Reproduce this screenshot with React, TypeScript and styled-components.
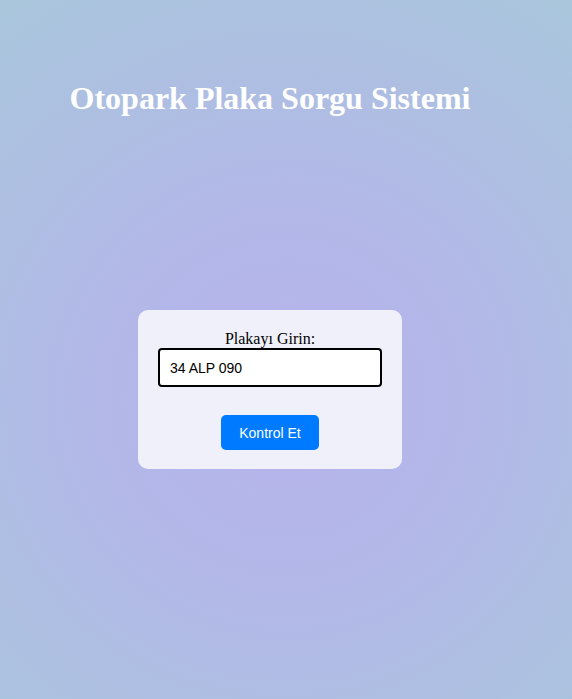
import React, { useState } from "react";
import styled, { createGlobalStyle } from "styled-components";

const Global = createGlobalStyle`
  html, body { margin: 0; padding: 0; }
  body {
    min-height: 100vh;
    background: radial-gradient(circle at 286px 400px, #b6b3ec 0%, #b3b7e8 35%, #a9c6dc 100%);
    font-family: "Liberation Serif", "Times New Roman", serif;
  }
`;

const Page = styled.div`
  width: 524px;
  padding: 0 8px;
  display: flex;
  flex-direction: column;
  align-items: center;
  min-height: 699px;
  box-sizing: content-box;
`;

const Title = styled.h1`
  margin: 80px 0 0;
  font-family: "Liberation Serif", "Times New Roman", serif;
  font-size: 32px;
  font-weight: bold;
  line-height: 37px;
  color: #ffffff;
`;

const Card = styled.div`
  margin-top: 193px;
  width: 264px;
  box-sizing: border-box;
  padding: 20px 20px 19px;
  background: #f0f0fa;
  border-radius: 10px;
  display: flex;
  flex-direction: column;
  align-items: center;
`;

const Label = styled.label`
  font-family: "Liberation Serif", "Times New Roman", serif;
  font-size: 16px;
  line-height: 18px;
  color: #000;
`;

const Input = styled.input`
  width: 224px;
  height: 39px;
  box-sizing: border-box;
  border: 2px solid #000;
  border-radius: 4px;
  padding: 0 10px;
  font-family: "Liberation Sans", Arial, sans-serif;
  font-size: 14px;
  color: #000;
  background: #fff;
  outline: none;
`;

const Button = styled.button`
  margin-top: 28px;
  width: 98px;
  height: 35px;
  border: none;
  border-radius: 5px;
  background: #007bff;
  color: #fff;
  font-family: "Liberation Sans", Arial, sans-serif;
  font-size: 14px;
  cursor: pointer;
`;

export default function App() {
  const [plate, setPlate] = useState("34 ALP 090");
  return (
    <>
      <Global />
      <Page>
        <Title>Otopark Plaka Sorgu Sistemi</Title>
        <Card>
          <Label htmlFor="plaka">Plakayı Girin:</Label>
          <Input id="plaka" value={plate} onChange={(e) => setPlate(e.target.value)} />
          <Button>Kontrol Et</Button>
        </Card>
      </Page>
    </>
  );
}
